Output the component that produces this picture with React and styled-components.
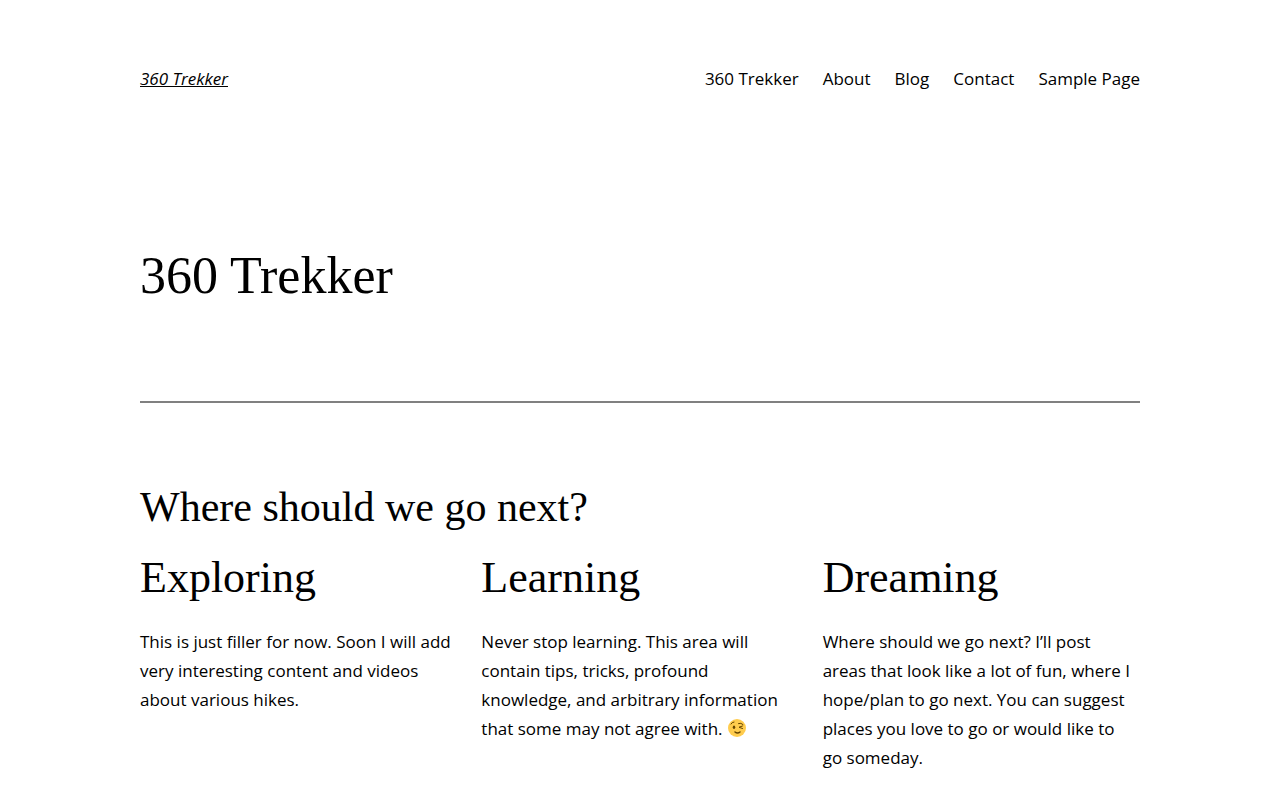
import React from "react";
import styled, { createGlobalStyle } from "styled-components";

const GlobalStyle = createGlobalStyle`
  * { box-sizing: border-box; }
  body {
    margin: 0;
    background: #fff;
    color: #000;
    font-family: "Segoe UI", "Open Sans", "Noto Sans", sans-serif;
    font-size: 17px;
    line-height: 29px;
  }
`;

const Page = styled.div`
  max-width: 1064px;
  margin: 0 auto;
  padding: 64px 32px 0;
`;

const Header = styled.header`
  display: flex;
  justify-content: space-between;
  align-items: center;
`;

const SiteTitle = styled.a`
  color: inherit;
  font-style: italic;
  text-decoration: underline;
`;

const Nav = styled.nav`
  display: flex;
  gap: 24px;
`;

const NavLink = styled.a`
  color: inherit;
  text-decoration: none;
`;

const Heading = styled.h2`
  margin: 0;
  font-family: "Times New Roman", "Liberation Serif", serif;
  font-weight: 400;
  font-size: ${(p) => p.$size}px;
  line-height: ${(p) => p.$line}px;
`;

const PageTitle = styled(Heading)`
  margin-top: 152px;
`;

const Divider = styled.hr`
  margin: 94px 0 80px;
  border: 0;
  border-top: 2px solid #808080;
`;

const Columns = styled.div`
  display: grid;
  grid-template-columns: repeat(3, 1fr);
  gap: 24px;
  margin-top: 20px;
`;

const Text = styled.p`
  margin: 22px 0 0;
  padding-right: 4px;
`;

const Emoji = styled.svg`
  width: 18px;
  height: 18px;
  margin: 0 1px;
  vertical-align: -2px;
`;

const Wink = () => (
  <Emoji viewBox="0 0 36 36" role="img" aria-label="Winking face">
    <circle cx="18" cy="18" r="18" fill="#FFCC4D" />
    <ellipse cx="12" cy="16.5" rx="2.5" ry="3.5" fill="#664500" />
    <g fill="none" stroke="#664500" strokeWidth="2" strokeLinecap="round" strokeLinejoin="round">
      <path d="M6 10q2-4 6-4" />
      <path d="M21 9q5-2 9 2" />
      <path d="M29 14l-7 2.5 7 2.5" />
      <path d="M14 26q5 4 10 0" strokeWidth="3" />
    </g>
  </Emoji>
);

const links = ["360 Trekker", "About", "Blog", "Contact", "Sample Page"];

const topics = [
  { title: "Exploring", text: "This is just filler for now. Soon I will add very interesting content and videos about various hikes." },
  { title: "Learning", text: "Never stop learning. This area will contain tips, tricks, profound knowledge, and arbitrary information that some may not agree with. ", wink: true },
  { title: "Dreaming", text: "Where should we go next? I’ll post areas that look like a lot of fun, where I hope/plan to go next. You can suggest places you love to go or would like to go someday." },
];

export default function App() {
  return (
    <>
      <GlobalStyle />
      <Page>
        <Header>
          <SiteTitle href="#">360 Trekker</SiteTitle>
          <Nav>
            {links.map((l) => <NavLink href="#" key={l}>{l}</NavLink>)}
          </Nav>
        </Header>
        <main>
          <PageTitle as="h1" $size={52} $line={62}>360 Trekker</PageTitle>
          <Divider />
          <Heading $size={42} $line={48}>Where should we go next?</Heading>
          <Columns>
            {topics.map((t) => (
              <section key={t.title}>
                <Heading as="h3" $size={44} $line={54}>{t.title}</Heading>
                <Text>{t.text}{t.wink && <Wink />}</Text>
              </section>
            ))}
          </Columns>
        </main>
      </Page>
    </>
  );
}
